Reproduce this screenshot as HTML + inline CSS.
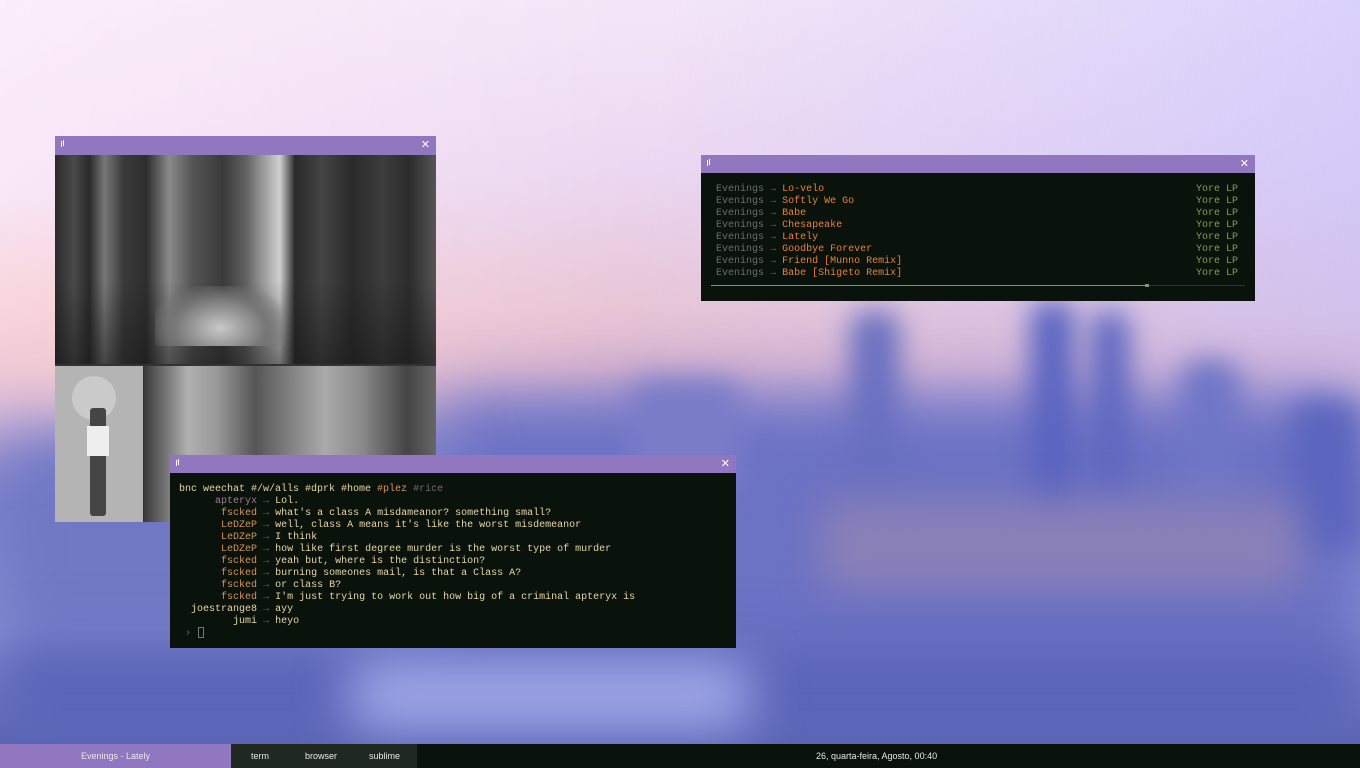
<!DOCTYPE html>
<html><head><meta charset="utf-8"><style>
*{margin:0;padding:0;box-sizing:border-box}
html,body{width:1360px;height:768px;overflow:hidden}
body{position:relative;background:linear-gradient(180deg,#f4e6f8 0%,#ecd8f2 22%,#e8c6d6 40%,#d8b4d0 48%,#a89ad4 56%,#7c82cc 66%,#8a92d8 82%,#5a64b0 97%);font-family:"Liberation Mono",monospace}
.sky{position:absolute;left:0;top:0;width:1360px;height:768px;background:linear-gradient(100deg,rgba(255,240,250,.7) 0%,rgba(255,255,255,0) 45%,rgba(190,190,255,.6) 100%);-webkit-mask-image:linear-gradient(180deg,#000 0%,#000 40%,transparent 60%);mask-image:linear-gradient(180deg,#000 0%,#000 40%,transparent 60%)}
.pink{position:absolute;left:-200px;top:200px;width:900px;height:300px;background:radial-gradient(ellipse at 35% 45%,rgba(250,200,200,.6),rgba(250,200,200,0) 65%)}
.blob{position:absolute;filter:blur(14px);border-radius:20px}
.win{position:absolute;background:#0a120c}
.tb{position:absolute;left:0;top:0;right:0;height:18px;background:#9176c0}
.tb .l{position:absolute;left:6px;top:5px;width:1px;height:6px;background:#fff;box-shadow:2px -1px 0 #fff}
.tb .x{position:absolute;right:6px;top:2px;color:#fff;font-size:11px;font-family:"Liberation Sans",sans-serif}
.t{font-size:10px;line-height:12px;white-space:pre;position:absolute}
.g{color:#6e6e66}.o{color:#e8803e}.gr{color:#8c9a54}.a{color:#707060}
.n{color:#d4945a}.m{color:#e6d6a6}.p{color:#a07c8c}
.bar{position:absolute;left:0;top:744px;width:1360px;height:24px;background:#0a120c;font-family:"Liberation Sans",sans-serif;font-size:9px;color:#e8e8e8}
</style></head><body>
<div class="sky"></div><div class="pink"></div>
<div class="blob" style="left:440px;top:400px;width:920px;height:280px;background:#6c72c4;filter:blur(30px)"></div>
<div class="blob" style="left:0px;top:440px;width:460px;height:200px;background:#7078c4;filter:blur(30px)"></div>
<div class="blob" style="left:850px;top:310px;width:50px;height:200px;background:#6a70c0"></div>
<div class="blob" style="left:1030px;top:300px;width:45px;height:220px;background:#5a64c0"></div>
<div class="blob" style="left:1090px;top:310px;width:40px;height:200px;background:#6068c0"></div>
<div class="blob" style="left:1180px;top:360px;width:60px;height:150px;background:#7076c6"></div>
<div class="blob" style="left:1290px;top:400px;width:70px;height:150px;background:#5c66be"></div>
<div class="blob" style="left:630px;top:380px;width:110px;height:120px;background:#7a7cc8"></div>
<div class="blob" style="left:820px;top:500px;width:480px;height:90px;background:#8a80b8;filter:blur(20px)"></div>
<div class="blob" style="left:0px;top:640px;width:1360px;height:110px;background:#5c66b8;filter:blur(25px)"></div>
<div class="blob" style="left:350px;top:660px;width:400px;height:70px;background:#a0a8e8;filter:blur(25px)"></div>

<div class="win" style="left:55px;top:136px;width:381px;height:386px;background:#333">
<div class="tb" style="height:19px"><div class="l"></div><div class="x">✕</div></div>
<div style="position:absolute;left:0;top:19px;width:381px;height:209px;background:linear-gradient(90deg,#2a2a2a 0%,#4a4a4a 5%,#2a2a2a 9%,#777 13%,#3a3a3a 18%,#2e2e2e 24%,#8a8a8a 30%,#555 36%,#3a3a3a 44%,#606060 50%,#b8b8b8 57%,#cfcfcf 59%,#2a2a2a 63%,#444 70%,#2a2a2a 78%,#3c3c3c 86%,#2c2c2c 93%,#555 100%)"></div>
<div style="position:absolute;left:0;top:19px;width:381px;height:209px;background:linear-gradient(180deg,rgba(0,0,0,0) 60%,rgba(20,20,20,.5) 100%)"></div>
<div style="position:absolute;left:100px;top:150px;width:130px;height:60px;background:radial-gradient(ellipse at 50% 70%,#c8c8c8,#777 50%,rgba(80,80,80,0) 80%)"></div>
<div style="position:absolute;left:0;top:230px;width:88px;height:156px;background:#b4b4b4"></div>
<div style="position:absolute;left:17px;top:240px;width:44px;height:44px;border-radius:50%;background:#cacaca"></div>
<div style="position:absolute;left:35px;top:272px;width:16px;height:108px;background:#454545;border-radius:3px"></div>
<div style="position:absolute;left:32px;top:290px;width:22px;height:30px;background:#eee"></div>
<div style="position:absolute;left:89px;top:230px;width:292px;height:156px;background:linear-gradient(90deg,#3a3a3a 0%,#b0b0b0 15%,#999 25%,#555 38%,#7a7a7a 48%,#aaa 62%,#888 75%,#444 90%,#666 100%)"></div>
</div>

<div class="win" style="left:701px;top:155px;width:554px;height:146px">
<div class="tb"><div class="l"></div><div class="x">✕</div></div>
<div class="t" style="left:15px;top:29px"><span class="g">Evenings</span> <span class="a">→</span> <span class="o">Lo-velo</span>
<span class="g">Evenings</span> <span class="a">→</span> <span class="o">Softly We Go</span>
<span class="g">Evenings</span> <span class="a">→</span> <span class="o">Babe</span>
<span class="g">Evenings</span> <span class="a">→</span> <span class="o">Chesapeake</span>
<span class="g">Evenings</span> <span class="a">→</span> <span class="o">Lately</span>
<span class="g">Evenings</span> <span class="a">→</span> <span class="o">Goodbye Forever</span>
<span class="g">Evenings</span> <span class="a">→</span> <span class="o">Friend [Munno Remix]</span>
<span class="g">Evenings</span> <span class="a">→</span> <span class="o">Babe [Shigeto Remix]</span></div>
<div class="t gr" style="left:495px;top:29px">Yore LP
Yore LP
Yore LP
Yore LP
Yore LP
Yore LP
Yore LP
Yore LP</div>
<div style="position:absolute;left:10px;top:130px;width:435px;height:1px;background:#8a9070"></div>
<div style="position:absolute;left:444px;top:129px;width:4px;height:3px;background:#8a9070"></div>
<div style="position:absolute;left:448px;top:130px;width:96px;height:1px;background:#4a2a2a"></div>
</div>

<div class="win" style="left:170px;top:455px;width:566px;height:193px">
<div class="tb"><div class="l"></div><div class="x">✕</div></div>
<div class="t" style="left:9px;top:29px"><span class="m">bnc weechat #/w/alls #dprk #home </span><span class="n">#plez</span> <span class="g">#rice</span>
<span class="p">      apteryx</span> <span class="a">→</span> <span class="m">Lol.</span>
<span class="n">       fscked</span> <span class="a">→</span> <span class="m">what's a class A misdameanor? something small?</span>
<span class="n">       LeDZeP</span> <span class="a">→</span> <span class="m">well, class A means it's like the worst misdemeanor</span>
<span class="n">       LeDZeP</span> <span class="a">→</span> <span class="m">I think</span>
<span class="n">       LeDZeP</span> <span class="a">→</span> <span class="m">how like first degree murder is the worst type of murder</span>
<span class="n">       fscked</span> <span class="a">→</span> <span class="m">yeah but, where is the distinction?</span>
<span class="n">       fscked</span> <span class="a">→</span> <span class="m">burning someones mail, is that a Class A?</span>
<span class="n">       fscked</span> <span class="a">→</span> <span class="m">or class B?</span>
<span class="n">       fscked</span> <span class="a">→</span> <span class="m">I'm just trying to work out how big of a criminal apteryx is</span>
<span class="m">  joestrange8</span> <span class="a">→</span> <span class="m">ayy</span>
<span class="m">         jumi</span> <span class="a">→</span> <span class="m">heyo</span>
 <span class="a">›</span></div>
<div style="position:absolute;left:28px;top:172px;width:6px;height:11px;border:1px solid #777"></div>
</div>

<div class="bar">
<div style="position:absolute;left:0;top:0;width:231px;height:24px;background:#9176c0;text-align:center;line-height:24px">Evenings - Lately</div>
<div style="position:absolute;left:231px;top:0;width:186px;height:24px;background:#202822"></div>
<div style="position:absolute;left:251px;top:0;line-height:24px">term</div>
<div style="position:absolute;left:305px;top:0;line-height:24px">browser</div>
<div style="position:absolute;left:369px;top:0;line-height:24px">sublime</div>
<div style="position:absolute;left:816px;top:0;line-height:24px">26, quarta-feira, Agosto, 00:40</div>
</div>
</body></html>
